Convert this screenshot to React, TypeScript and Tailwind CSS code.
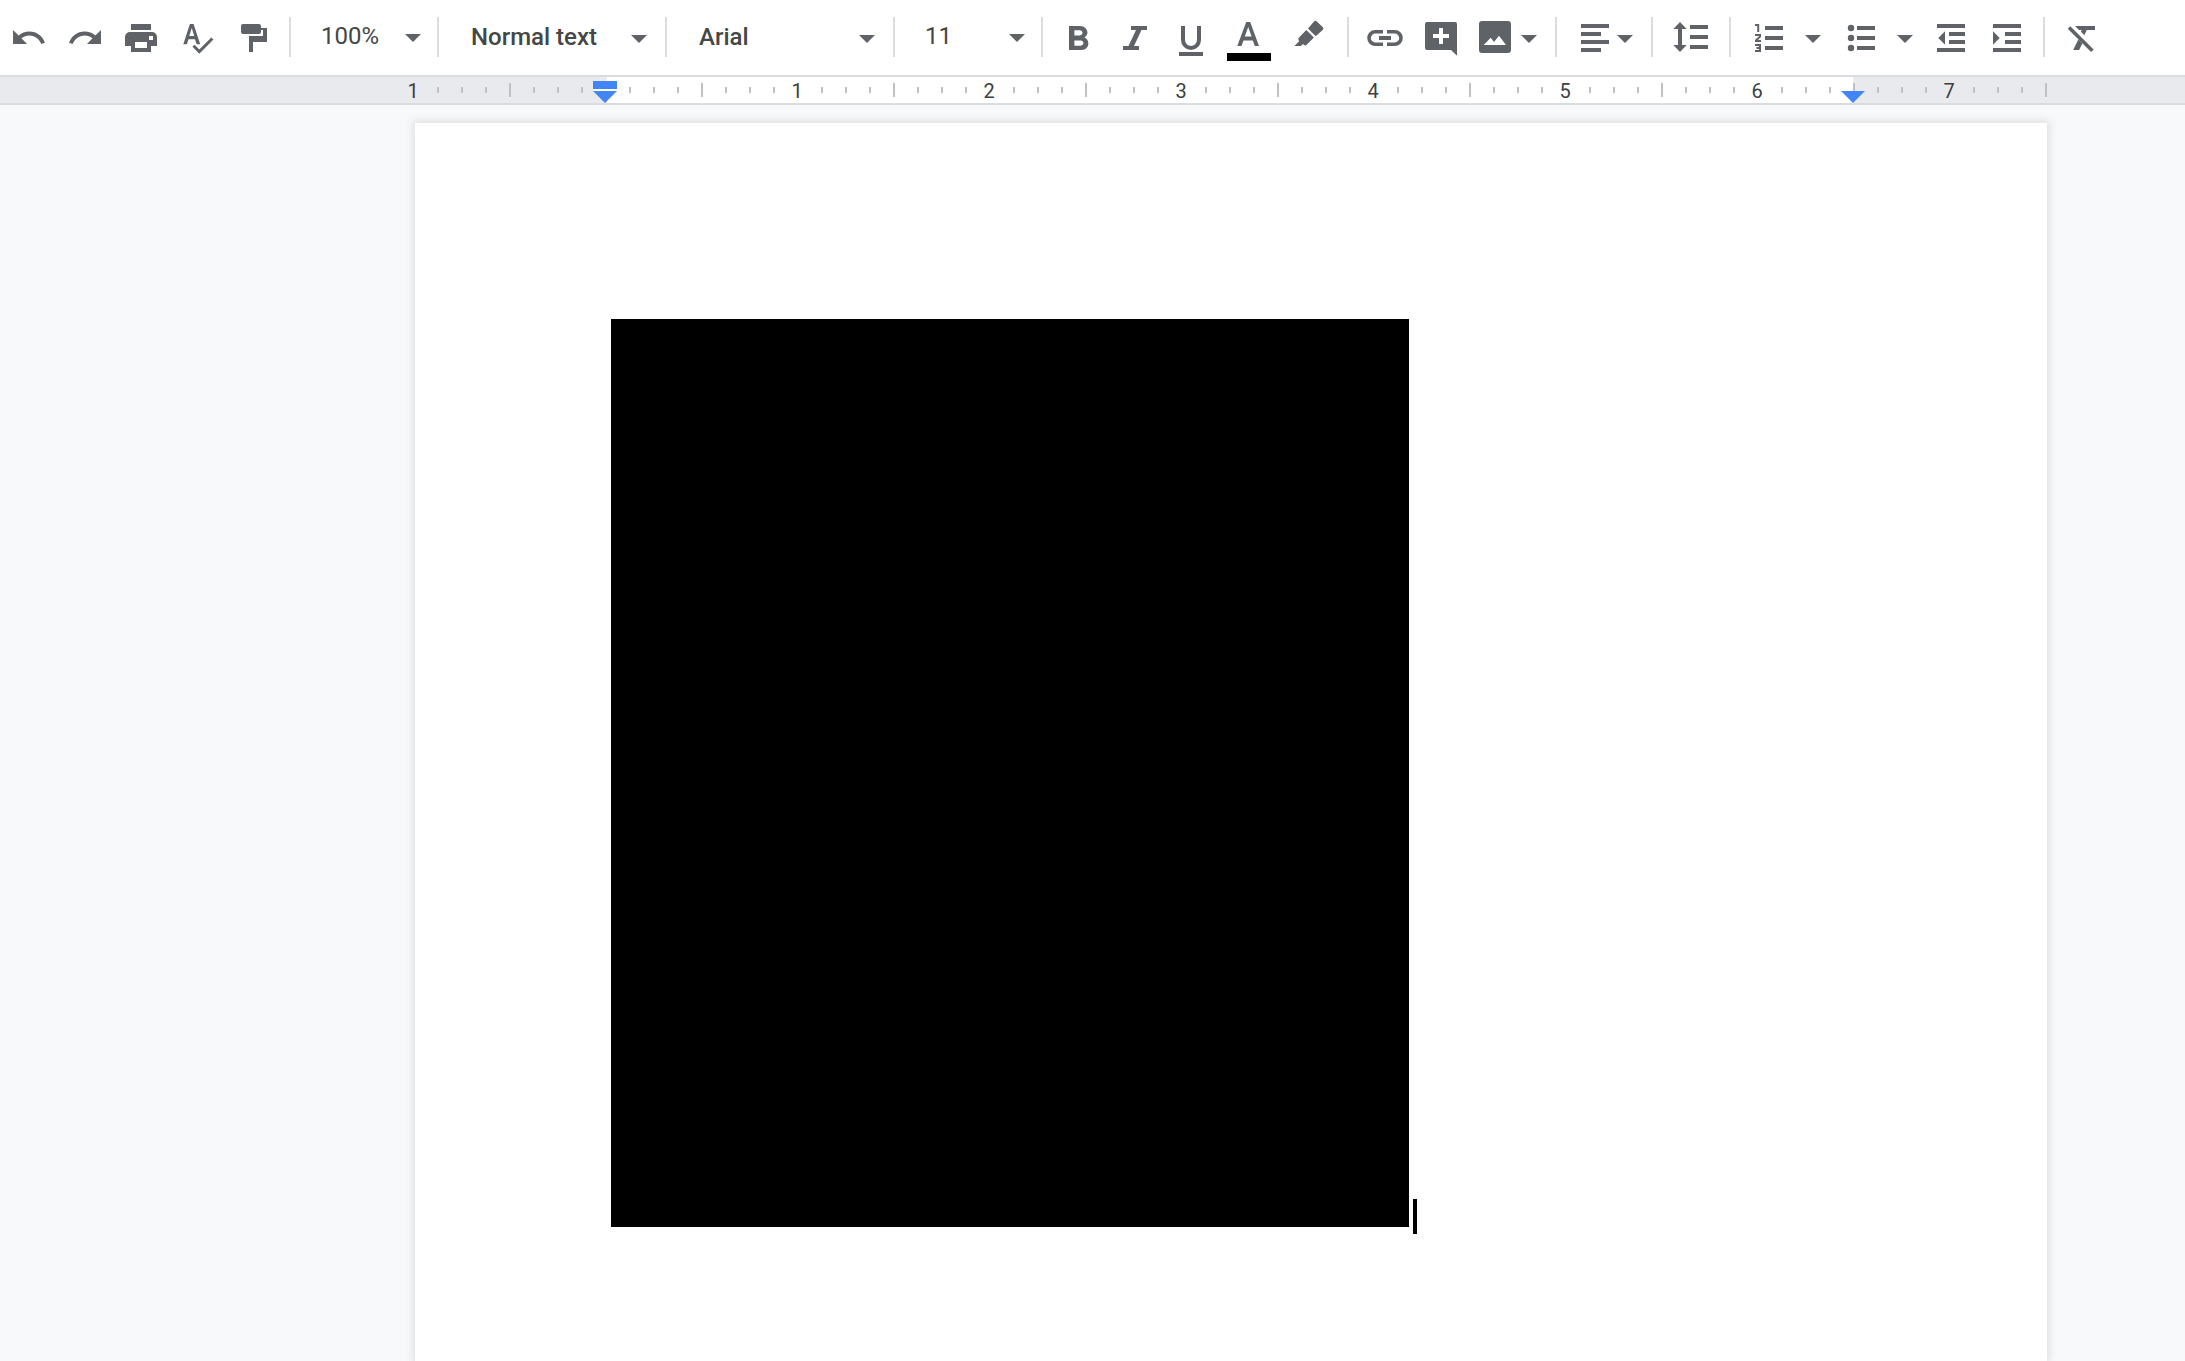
import { useState } from 'react'
import type { ReactNode } from 'react'
import { clsx } from 'clsx'

const TICKS = Array.from({ length: 69 }, (_, i) => i)

function Icon({ children }: { children: ReactNode }) {
  return (
    <svg viewBox="0 0 40 40" className="w-10 h-10 shrink-0 overflow-visible" fill="currentColor" aria-hidden="true">
      {children}
    </svg>
  )
}

function Caret({ className }: { className?: string }) {
  return (
    <svg viewBox="0 0 16 8" className={clsx('w-4 h-2 shrink-0', className)} fill="currentColor" aria-hidden="true">
      <path d="M0 0h16L8 8z" />
    </svg>
  )
}

function Divider() {
  return <div className="w-0.5 h-10 mx-2 shrink-0 bg-[#dadce0]" />
}

type ToolButtonProps = {
  label: string
  className?: string
  children: ReactNode
}

function ToolButton({ label, className = 'w-14', children }: ToolButtonProps) {
  return (
    <button
      type="button"
      aria-label={label}
      title={label}
      className={clsx('flex h-10 shrink-0 items-center justify-center rounded hover:bg-[#f1f3f4]', className)}
    >
      {children}
    </button>
  )
}

type ToolSelectProps = {
  label: string
  options: string[]
  numeric?: boolean
}

function ToolSelect({ label, options, numeric }: ToolSelectProps) {
  const [value, setValue] = useState(options[0])
  return (
    <div className={clsx('relative h-10 shrink-0', numeric ? 'w-[130px]' : 'w-[210px]')}>
      <select
        aria-label={label}
        value={value}
        onChange={(e) => setValue(e.target.value)}
        className={clsx(
          'h-10 w-full appearance-none bg-transparent pr-10 text-2xl text-[#444746] outline-none',
          numeric ? 'pl-[22px] pb-0.5' : 'pl-6 font-medium'
        )}
      >
        {options.map((o) => (
          <option key={o}>{o}</option>
        ))}
      </select>
      <Caret className={clsx('pointer-events-none absolute', numeric ? 'top-[17px] right-2' : 'top-[18px] right-2.5')} />
    </div>
  )
}

function Toolbar() {
  return (
    <div role="toolbar" aria-label="Formatting" className="flex items-start bg-white pl-px pt-[17px] pb-[18px] text-[#5f6368]">
      <ToolButton label="Undo">
        <Icon>
          <path
            transform="translate(0.9 2) scale(1.56)"
            d="M12.5 8c-2.65 0-5.05.99-6.9 2.6L2 7v9h9l-3.62-3.62c1.39-1.16 3.16-1.88 5.12-1.88 3.54 0 6.55 2.31 7.6 5.5l2.37-.78C21.08 11.03 17.15 8 12.5 8z"
          />
        </Icon>
      </ToolButton>
      <ToolButton label="Redo">
        <Icon>
          <path
            transform="translate(39.1 2) scale(-1.56 1.56)"
            d="M12.5 8c-2.65 0-5.05.99-6.9 2.6L2 7v9h9l-3.62-3.62c1.39-1.16 3.16-1.88 5.12-1.88 3.54 0 6.55 2.31 7.6 5.5l2.37-.78C21.08 11.03 17.15 8 12.5 8z"
          />
        </Icon>
      </ToolButton>
      <ToolButton label="Print">
        <Icon>
          <path
            fillRule="evenodd"
            d="M10 7h20v6H10zM9 15h22a5 5 0 0 1 5 5v9h-6v6H10v-6H4v-9a5 5 0 0 1 5-5zM14 25h12v6H14zM28 19h4v4h-4z"
          />
        </Icon>
      </ToolButton>
      <ToolButton label="Spelling and grammar check">
        <Icon>
          <path fillRule="evenodd" d="M6.3 27.3 12.9 7h3.7l6.6 20.3h-3.6l-1.6-5h-6.5l-1.6 5zM12.3 19h4.9L14.75 11z" />
          <path d="M16.5 28.8l5.8 5.8 13.1-13.1" fill="none" stroke="currentColor" strokeWidth="3" />
        </Icon>
      </ToolButton>
      <ToolButton label="Paint format">
        <Icon>
          <path d="M10 7h16a2 2 0 0 1 2 2v2h6v14H20v10h-4V19h14v-6h-2v2a2 2 0 0 1-2 2H10a2 2 0 0 1-2-2V9a2 2 0 0 1 2-2z" />
        </Icon>
      </ToolButton>

      <Divider />
      <ToolSelect label="Zoom" numeric options={['100%', '50%', '75%', '125%', '150%', '200%']} />
      <Divider />
      <ToolSelect label="Styles" options={['Normal text', 'Title', 'Subtitle', 'Heading 1', 'Heading 2']} />
      <Divider />
      <ToolSelect label="Font" options={['Arial', 'Georgia', 'Roboto', 'Verdana']} />
      <Divider />
      <ToolSelect label="Font size" numeric options={['11', '8', '9', '10', '12', '14', '18']} />
      <Divider />

      <ToolButton label="Bold">
        <Icon>
          <path
            transform="translate(-2.6 2.1) scale(1.8 1.714)"
            d="M15.6 10.79c.97-.67 1.65-1.77 1.65-2.79 0-2.26-1.75-4-4-4H7v14h7.04c2.09 0 3.71-1.7 3.71-3.79 0-1.52-.86-2.82-2.15-3.42zM10 6.5h3c.83 0 1.5.67 1.5 1.5s-.67 1.5-1.5 1.5h-3v-3zm3.5 9H10v-3h3.5c.83 0 1.5.67 1.5 1.5s-.67 1.5-1.5 1.5z"
          />
        </Icon>
      </ToolButton>
      <ToolButton label="Italic">
        <Icon>
          <path d="M16 9h16v4h-5.5L19 29h5v4H8v-4h5.5L21 13h-5z" />
        </Icon>
      </ToolButton>
      <ToolButton label="Underline">
        <Icon>
          <path d="M12 9v14a8 8 0 0 0 16 0V9" fill="none" stroke="currentColor" strokeWidth="4" />
          <path d="M8 35h24v4H8z" />
        </Icon>
      </ToolButton>
      <ToolButton label="Text color" className="w-[60px]">
        <Icon>
          <path fillRule="evenodd" d="M8.3 29 17.2 5h4L30 29h-4.2l-2-5.6h-9.3l-2 5.6zM15.8 19.6h6.8L19.2 10z" />
          <path d="M-2 36h44v8H-2z" fill="#000" />
        </Icon>
      </ToolButton>
      <ToolButton label="Highlight color" className="w-[60px]">
        <Icon>
          <path d="M25 4.5a2 2 0 0 1 2.8 0l5.9 5.6a2 2 0 0 1 0 2.8L26.7 19.3 19 11.5z" />
          <path d="M17.3 13l7.6 7.4-7.2 7.4a2 2 0 0 1-2.8 0L14 27l-2 2H5.3l4.9-4.8a3 3 0 0 1 .3-4.2z" />
        </Icon>
      </ToolButton>

      <Divider />
      <ToolButton label="Insert link">
        <Icon>
          <path
            d="M18 14.8h-7.8a6.2 6.2 0 0 0 0 12.4H18M22 14.8h7.8a6.2 6.2 0 0 1 0 12.4H22"
            fill="none"
            stroke="currentColor"
            strokeWidth="3.6"
          />
          <path d="M14 19h12v4H14z" />
        </Icon>
      </ToolButton>
      <ToolButton label="Add comment">
        <Icon>
          <path
            fillRule="evenodd"
            d="M6 5h28a2 2 0 0 1 2 2v31.7L30 33H6a2 2 0 0 1-2-2V7a2 2 0 0 1 2-2zM18 11v6h-6v4h6v6h4v-6h6v-4h-6v-6z"
          />
        </Icon>
      </ToolButton>
      <ToolButton label="Insert image" className="gap-1.5 pl-1.5 pr-2.5">
        <Icon>
          <path
            fillRule="evenodd"
            d="M7 4h26a3 3 0 0 1 3 3v26a3 3 0 0 1-3 3H7a3 3 0 0 1-3-3V7a3 3 0 0 1 3-3zM8.7 28H31L24 18.7l-5 6.3-3.3-4.3z"
          />
        </Icon>
        <Caret className="mt-1" />
      </ToolButton>

      <Divider />
      <ToolButton label="Align" className="gap-0.5 px-2.5">
        <Icon>
          <path d="M6 7h28v4H6zM6 15h20v4H6zM6 23h28v4H6zM6 31h20v4H6z" />
        </Icon>
        <Caret className="mt-1" />
      </ToolButton>
      <Divider />
      <ToolButton label="Line spacing" className="w-[60px]">
        <Icon>
          <path d="M9 5l6.7 7H11v16h4.7L9 35l-6.7-7H7V12H2.3zM19 8h18v4H19zM19 18h18v4H19zM19 28h18v4H19z" />
        </Icon>
      </ToolButton>
      <Divider />

      <ToolButton label="Numbered list" className="gap-4 px-2.5">
        <Icon>
          <path d="M16 9h18v4H16zM16 19h18v4H16zM16 29h18v4H16z" />
          <path
            d="M6 8h3.2v7M6 18h5v1.6L7 23.4V24h5M6 28h5v6H6M7.5 31H11"
            fill="none"
            stroke="currentColor"
            strokeWidth="2"
          />
        </Icon>
        <Caret className="mt-1" />
      </ToolButton>
      <ToolButton label="Bulleted list" className="gap-4 px-2.5">
        <Icon>
          <path d="M16 9h18v4H16zM16 19h18v4H16zM16 29h18v4H16z" />
          <circle cx="10" cy="11" r="3.2" />
          <circle cx="10" cy="21" r="3.2" />
          <circle cx="10" cy="31" r="3.2" />
        </Icon>
        <Caret className="mt-1" />
      </ToolButton>
      <ToolButton label="Decrease indent">
        <Icon>
          <path d="M6 7h28v4H6zM18 15h16v4H18zM18 23h16v4H18zM6 31h28v4H6zM14 14.3v13.4L7.3 21z" />
        </Icon>
      </ToolButton>
      <ToolButton label="Increase indent">
        <Icon>
          <path d="M6 7h28v4H6zM18 15h16v4H18zM18 23h16v4H18zM6 31h28v4H6zM6 14.3v13.4l6.7-6.7z" />
        </Icon>
      </ToolButton>
      <Divider />
      <ToolButton label="Clear formatting">
        <Icon>
          <path d="M14 9h20v4h-8.2l-2.5 5.2-3.4-3.4.9-1.8H18zM17.4 22.2l4 4-3.3 6.8h-5.9z" />
          <path d="M8 10.4l23.4 23.4" fill="none" stroke="currentColor" strokeWidth="3.6" />
        </Icon>
      </ToolButton>
    </div>
  )
}

function Ruler() {
  return (
    <div className="grid h-[30px] shrink-0 overflow-hidden border-y-2 border-[#dadce0] bg-[#e8eaed]">
      {/* Writable area between the margins */}
      <div className="col-start-1 row-start-1 flex pl-[607px]">
        <div className="w-[1246px] shrink-0 bg-white" />
      </div>
      {/* One mark every eighth of an inch */}
      <div className="col-start-1 row-start-1 flex items-center pl-[402px]">
        {TICKS.map((i) => {
          if (i === 8) return <div key={i} className="w-6 shrink-0" />
          if (i % 8 === 0) {
            return (
              <span key={i} className="w-6 shrink-0 pt-0.5 pr-0.5 text-center text-xl leading-5 text-[#3c4043]">
                {Math.abs(i / 8 - 1)}
              </span>
            )
          }
          return (
            <div key={i} className="flex w-6 shrink-0 justify-center">
              <div className={clsx('w-0.5 bg-[#bdc1c6]', i % 4 === 0 ? 'h-3.5' : 'h-1.5')} />
            </div>
          )
        })}
      </div>
      {/* Indent markers */}
      <div className="col-start-1 row-start-1 flex items-end pl-[593px] text-[#4285f4]">
        <div className="flex w-[1272px] shrink-0 items-end justify-between">
          <svg viewBox="0 0 24 22" className="h-[22px] w-6" fill="currentColor" role="img" aria-label="Left indent">
            <path d="M0 0h24v8H0z" />
            <path d="M0 8h24v2H0z" fill="#fff" />
            <path d="M0 10h24L12 22z" />
          </svg>
          <svg viewBox="0 0 24 12" className="h-3 w-6" fill="currentColor" role="img" aria-label="Right indent">
            <path d="M0 0h24L12 12z" />
          </svg>
        </div>
      </div>
    </div>
  )
}

export default function App() {
  return (
    <div className="flex min-h-screen flex-col overflow-hidden bg-[#f8f9fa] font-[Roboto,'Liberation_Sans',sans-serif]">
      <Toolbar />
      <Ruler />
      <main className="flex flex-1 pt-[18px] pl-[415px]">
        <article className="w-[1632px] shrink-0 bg-white px-48 pt-48 shadow-[0_0_8px_2px_rgba(60,64,67,0.15)]">
          <div className="flex items-end gap-1 p-1">
            <div className="h-[908px] w-[798px] bg-black" />
            <div className="-mb-[7px] h-[35px] w-1 bg-black" />
          </div>
        </article>
      </main>
    </div>
  )
}
